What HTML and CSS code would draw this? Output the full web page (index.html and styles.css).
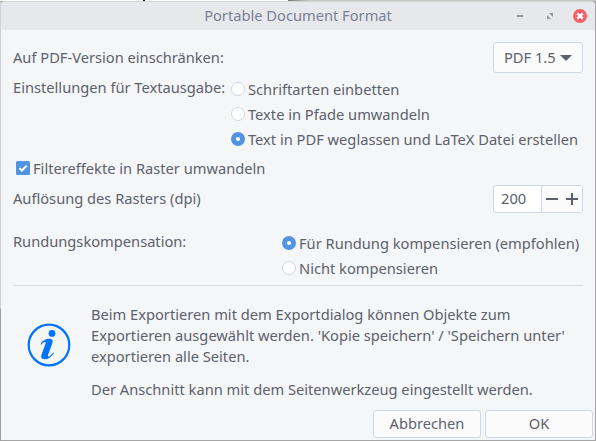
FILE: index.html
```html
<!DOCTYPE html>
<html lang="de">
<head>
<meta charset="utf-8">
<title>Portable Document Format</title>
<link rel="stylesheet" href="styles.css">
</head>
<body>
<div class="backdrop"><span class="backdrop-line"></span><span class="backdrop-shade"></span></div>
<main class="dialog">
  <header class="titlebar">
    <h1 class="title">Portable Document Format</h1>
    <div class="controls">
      <svg class="control" viewBox="0 0 14 14"><path class="control-fill" d="M4 6h6v2H4z"/></svg>
      <svg class="control" viewBox="0 0 14 14"><path class="control-fill" d="M6 4h4v4zM4 6v4h4z"/></svg>
      <svg class="control" viewBox="0 0 14 14"><circle class="close-disc" cx="7" cy="7" r="7"/><path class="close-cross" d="M4.3 4.3l5.4 5.4M9.7 4.3L4.3 9.7"/></svg>
    </div>
  </header>
  <div class="content">
    <div class="row row-version">
      <span>Auf PDF-Version einschränken:</span>
      <button class="select">PDF 1.5<svg class="arrow" viewBox="0 0 12 6"><path d="M0 0h12L6 6z"/></svg></button>
    </div>
    <div class="row row-text">
      <span class="group-label">Einstellungen für Textausgabe:</span>
      <div class="radios">
        <label class="option"><span class="radio"></span><span>Schriftarten einbetten</span></label>
        <label class="option"><span class="radio"></span><span>Texte in Pfade umwandeln</span></label>
        <label class="option"><span class="radio checked"></span><span>Text in PDF weglassen und LaTeX Datei erstellen</span></label>
      </div>
    </div>
    <div class="row row-filter">
      <svg class="checkbox" viewBox="0 0 14 14"><rect class="check-box" width="14" height="14" rx="1.5"/><path class="check-mark" d="M3.4 7.1l2.5 2.4 4.8-4.9"/></svg>
      <span>Filtereffekte in Raster umwandeln</span>
    </div>
    <div class="row row-dpi">
      <span class="dpi-label">Auflösung des Rasters (dpi)</span>
      <div class="spin">
        <span class="spin-value">200</span>
        <span class="spin-buttons">
          <svg class="spin-icon" viewBox="0 0 12 12"><path d="M0 5h12v2H0z"/></svg>
          <svg class="spin-icon" viewBox="0 0 12 12"><path d="M0 5h5V0h2v5h5v2H7v5H5V7H0z"/></svg>
        </span>
      </div>
    </div>
    <div class="row row-rounding">
      <span class="group-label">Rundungskompensation:</span>
      <div class="radios radios-end">
        <label class="option"><span class="radio checked"></span><span>Für Rundung kompensieren (empfohlen)</span></label>
        <label class="option"><span class="radio"></span><span>Nicht kompensieren</span></label>
      </div>
    </div>
    <hr class="divider">
    <section class="info">
      <svg class="info-icon" viewBox="0 0 44 44">
        <circle class="info-ring" cx="22" cy="22" r="20.3"/>
        <circle class="info-fill" cx="25" cy="10.4" r="3.4"/>
        <path class="info-fill" d="M13.5 21.2C16.2 17.2 18.8 15.8 22.2 15.8C25.6 15.8 26.2 17.6 25.2 20.5L21.2 31.6C20.7 33.1 21 33.8 21.9 33.5C23.2 33 24.8 31.2 26.2 29.4L26.9 29.9C24.2 34 21 36.3 17.8 36.3C14.6 36.3 13.5 34.6 14.6 31.6L18.5 20.8C19 19.3 18.6 18.5 17.7 18.8C16.5 19.2 15.4 20.4 14.3 21.7Z"/>
      </svg>
      <div class="info-text">
        <p>Beim Exportieren mit dem Exportdialog können Objekte zum<br>Exportieren ausgewählt werden. 'Kopie speichern' / 'Speichern unter'<br>exportieren alle Seiten.</p>
        <p>Der Anschnitt kann mit dem Seitenwerkzeug eingestellt werden.</p>
      </div>
    </section>
  </div>
  <footer class="actions">
    <button class="button">Abbrechen</button>
    <button class="button">OK</button>
  </footer>
</main>
</body>
</html>
```
FILE: styles.css
```css
* { box-sizing: border-box; }
body {
  position: relative;
  width: 596px;
  height: 441px;
  margin: 0;
  overflow: hidden;
  background: linear-gradient(#d0d1d3 308px, #a0a0a0 309px) 0 0 / 1px 100% no-repeat, #a5a5a5;
  color: #5c616c;
  font: 14.67px/21px "Noto Sans", sans-serif;
  white-space: nowrap;
}
.backdrop {
  display: flex;
  width: 596px;
  height: 1px;
  background: #fff;
}
.backdrop-line { width: 2px; margin-left: 143px; background: #000; }
.backdrop-shade { width: 308px; margin-left: 143px; background: linear-gradient(90deg, #777, #c5c7c4 20px); }
.dialog {
  display: flex;
  flex-direction: column;
  width: 594px;
  height: 439px;
  margin: 0 1px;
  border-top: 1px solid #d4d5d5;
  border-radius: 4px 4px 0 0;
  background: #f5f6f8;
  overflow: hidden;
}
.titlebar {
  display: grid;
  flex: none;
  grid-template-columns: 1fr auto 1fr;
  align-items: center;
  height: 28px;
  padding-right: 8px;
  background: #e7e8eb;
}
.title {
  grid-column: 2;
  margin: 0;
  padding: 0 0 2px 8px;
  color: #7a8096;
  font-size: 14.67px;
  font-weight: 400;
}
.controls { display: flex; justify-content: flex-end; gap: 16px; }
.control { display: block; width: 14px; height: 14px; }
.control-fill { fill: #90939b; }
.close-disc { fill: #f46067; }
.close-cross { stroke: #fff; stroke-width: 2.4; }
.content { flex: none; height: 380px; padding: 12px 12px 0; }
.row { display: flex; justify-content: space-between; align-items: center; }
.select, .button {
  border: 1px solid #cfd6e6;
  border-radius: 3px;
  background: #fbfbfc;
  color: inherit;
  font: inherit;
}
.select {
  display: flex;
  align-items: center;
  gap: 4px;
  width: 90px;
  height: 31px;
  padding: 0 10px;
}
.arrow { width: 12px; height: 6px; fill: #5c616c; }
.row-text { align-items: flex-start; height: 75px; margin-top: 4px; }
.group-label { line-height: 20px; }
.radios { width: 352px; }
.radios-end { width: 301px; }
.option { display: flex; align-items: center; gap: 3px; height: 25px; }
.radio {
  flex: none;
  width: 14px;
  height: 14px;
  margin-bottom: 1px;
  border: 1px solid #cfd6e6;
  border-radius: 50%;
  background: #fff;
}
.radio.checked { border: 5px solid #5294e2; }
.row-filter { justify-content: flex-start; gap: 3px; height: 30px; padding: 2px 3px 0; }
.checkbox { width: 14px; height: 14px; }
.check-box { fill: #5294e2; }
.check-mark { fill: none; stroke: #fff; stroke-width: 2; }
.row-dpi { height: 34px; }
.dpi-label { padding-bottom: 2px; }
.spin {
  display: flex;
  width: 90px;
  height: 28px;
  border: 1px solid #cfd6e6;
  border-radius: 3px;
  background: #fff;
}
.spin-value { width: 48px; padding-left: 7px; line-height: 25px; border-right: 1px solid #cfd6e6; }
.spin-buttons { display: flex; align-items: center; gap: 8px; padding-left: 4px; flex: 1; background: #fbfbfc; }
.spin-icon { width: 12px; height: 12px; fill: #5c616c; }
.row-rounding { align-items: flex-start; height: 50px; margin-top: 15px; }
.divider { height: 1px; margin: 4px 0 0; border: 0; background: #d9dbe0; }
.info { display: flex; padding-left: 14px; margin-top: 18px; }
.info-icon { width: 44px; height: 44px; margin-top: 19px; }
.info-ring { fill: none; stroke: #0073ff; stroke-width: 2.2; }
.info-fill { fill: #0073ff; }
.info-text { margin-left: 20px; }
.info-text p { margin: 0 0 12px; }
.actions { display: flex; justify-content: flex-end; gap: 4px; padding-right: 2px; }
.button { width: 108px; height: 28px; padding: 0 0 2px; }
```
